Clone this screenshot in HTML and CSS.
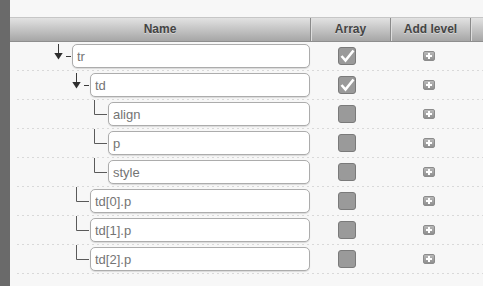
FILE: index.html
```html
<!DOCTYPE html>
<html lang="en">
<head>
    <title>Structure editor</title>
    <meta name="viewport" content="width=device-width, initial-scale=1.0" />
    <link rel="stylesheet" href="styles.css">
</head>

<body>
<div class="app">
    <div class="rail"></div>

    <div class="main">
        <div class="head">
            <div class="col">Name</div>
            <div class="col">Array</div>
            <div class="col">Add level</div>
            <div class="col"></div>
        </div>

        <div class="rows">
            <div class="row">
                <div class="node lvl0">
                    <svg class="twig" width="18" height="28"><path d="M4.5 2V11" /><polygon points="0.3,11 8.7,11 4.5,17.5" /><path d="M12 14.5H17" /></svg>
                    <input class="field" type="text" value="tr">
                </div>
                <div class="check"><span class="box"><svg width="18" height="18"><polyline points="3.5,9 7.5,13.5 15.5,3.5" /></svg></span></div>
                <div class="add"><span class="plus"></span></div>
            </div>

            <div class="row">
                <div class="node lvl1">
                    <svg class="twig" width="18" height="28"><path d="M4.5 2V11" /><polygon points="0.3,11 8.7,11 4.5,17.5" /><path d="M12 14.5H17" /></svg>
                    <input class="field" type="text" value="td">
                </div>
                <div class="check"><span class="box"><svg width="18" height="18"><polyline points="3.5,9 7.5,13.5 15.5,3.5" /></svg></span></div>
                <div class="add"><span class="plus"></span></div>
            </div>

            <div class="row">
                <div class="node lvl2">
                    <svg class="twig leaf" width="18" height="28"><path d="M4.5 0V14.5H17" /></svg>
                    <input class="field" type="text" value="align">
                </div>
                <div class="check"><span class="box"></span></div>
                <div class="add"><span class="plus"></span></div>
            </div>

            <div class="row">
                <div class="node lvl2">
                    <svg class="twig leaf" width="18" height="28"><path d="M4.5 0V14.5H17" /></svg>
                    <input class="field" type="text" value="p">
                </div>
                <div class="check"><span class="box"></span></div>
                <div class="add"><span class="plus"></span></div>
            </div>

            <div class="row">
                <div class="node lvl2">
                    <svg class="twig leaf" width="18" height="28"><path d="M4.5 0V14.5H17" /></svg>
                    <input class="field" type="text" value="style">
                </div>
                <div class="check"><span class="box"></span></div>
                <div class="add"><span class="plus"></span></div>
            </div>

            <div class="row">
                <div class="node lvl1">
                    <svg class="twig leaf" width="18" height="28"><path d="M4.5 0V14.5H17" /></svg>
                    <input class="field" type="text" value="td[0].p">
                </div>
                <div class="check"><span class="box"></span></div>
                <div class="add"><span class="plus"></span></div>
            </div>

            <div class="row">
                <div class="node lvl1">
                    <svg class="twig leaf" width="18" height="28"><path d="M4.5 0V14.5H17" /></svg>
                    <input class="field" type="text" value="td[1].p">
                </div>
                <div class="check"><span class="box"></span></div>
                <div class="add"><span class="plus"></span></div>
            </div>

            <div class="row">
                <div class="node lvl1">
                    <svg class="twig leaf" width="18" height="28"><path d="M4.5 0V14.5H17" /></svg>
                    <input class="field" type="text" value="td[2].p">
                </div>
                <div class="check"><span class="box"></span></div>
                <div class="add"><span class="plus"></span></div>
            </div>
        </div>
    </div>
</div>
</body>
</html>
```

FILE: styles.css
```css
* {
    box-sizing: border-box;
}

body {
    margin: 0;
    background: #f7f7f7;
    font-family: "Liberation Sans", Arial, sans-serif;
}

.app {
    display: flex;
    height: 100vh;
}

.rail {
    width: 10px;
    flex: none;
    background: #6a6a6a;
}

.main {
    flex: 1;
    padding-top: 17px;
}

/* header */
.head {
    display: grid;
    grid-template-columns: 300px 80px 80px 1fr;
    height: 25px;
    border-top: 1px solid #c6c6c6;
    border-bottom: 1px solid #8e8e8e;
    background: linear-gradient(#e2e2e2, #a6a6a6);
}

.head .col {
    font-size: 12px;
    font-weight: bold;
    color: #444;
    text-align: center;
    line-height: 23px;
    text-shadow: 0 1px 0 rgba(255, 255, 255, 0.4);
}

.head .col + .col {
    border-left: 1px solid #8a8a8a;
    box-shadow: inset 1px 0 0 #dedede;
}

/* rows */
.rows {
    margin-left: 7px;
}

.row {
    display: grid;
    grid-template-columns: 293px 80px 80px 1fr;
    height: 29px;
    padding-bottom: 1px;
    background: repeating-linear-gradient(90deg, #d9d9d9 0 2px, transparent 2px 5px) left bottom / 100% 1px no-repeat;
}

.node {
    display: flex;
    align-items: center;
}

.lvl0 { padding-left: 37px; }
.lvl1 { padding-left: 55px; }
.lvl2 { padding-left: 73px; }

.twig {
    flex: none;
    display: block;
}

.twig path {
    fill: none;
    stroke: #3a3a3a;
    stroke-width: 1;
}

.twig polygon {
    fill: #2e2e2e;
}

.twig.leaf path {
    stroke: #5a5a5a;
}

.field {
    flex: 1;
    min-width: 0;
    height: 24px;
    margin: 0;
    padding: 0 4px;
    border: 1px solid #acacac;
    border-radius: 5px;
    background: #fff;
    box-shadow: 0 1px 1px rgba(0, 0, 0, 0.12);
    font-family: "Liberation Sans", Arial, sans-serif;
    font-size: 13px;
    color: #747474;
    outline: none;
}

.check {
    display: flex;
    align-items: center;
    padding-left: 28px;
}

.box {
    display: block;
    width: 18px;
    height: 18px;
    border: 1px solid #7a7a7a;
    border-radius: 3px;
    background: #9a9a9a;
}

.box svg {
    display: block;
    margin: -1px;
}

.box polyline {
    fill: none;
    stroke: #fff;
    stroke-width: 2.6;
}

.add {
    display: flex;
    align-items: center;
    padding-left: 33px;
}

.plus {
    position: relative;
    display: block;
    width: 12px;
    height: 10px;
    border: 1px solid #8c8c8c;
    border-radius: 2px;
    background: linear-gradient(#b9b9b9, #8f8f8f);
}

.plus::before,
.plus::after {
    content: "";
    position: absolute;
    background: #fff;
}

.plus::before {
    left: 2px;
    top: 3px;
    width: 6px;
    height: 2px;
}

.plus::after {
    left: 4px;
    top: 1px;
    width: 2px;
    height: 6px;
}
```
